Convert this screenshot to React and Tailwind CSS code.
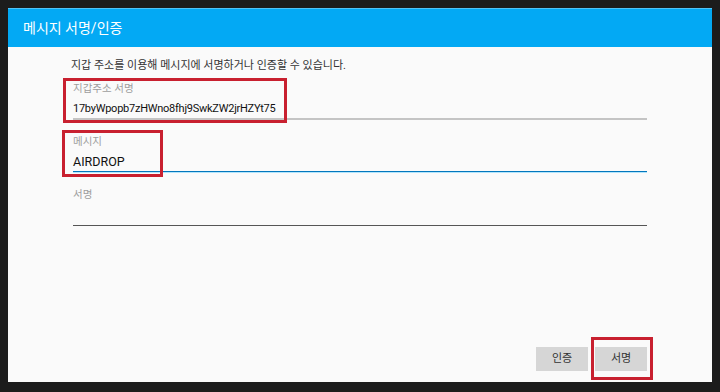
import React from "react";

const font = { fontFamily: 'Roboto, "Noto Sans CJK KR", sans-serif' };

function Field({ label, value, line, valueClass }) {
  return (
    <div className="flex flex-col">
      <div className="h-[14px] text-[10.5px] leading-[14px] text-[#9e9e9e]">{label}</div>
      <div className={`mt-[4px] h-[18px] leading-[18px] text-[#111] ${valueClass || "text-[11px]"}`}>
        {value}
      </div>
      <div className={line}></div>
    </div>
  );
}

export default function App() {
  return (
    <div
      className="w-[720px] h-[392px] bg-[#1c1c1c] pt-[8px] pl-[8px]"
      style={font}
    >
      <div className="relative w-[704px] h-[374px] bg-[#fafafa] flex flex-col">
        <div className="h-[39px] bg-[#03a9f4] border-t border-[#4fc3f7] flex items-center pl-[15px] text-[14px] text-white">
          메시지 서명/인증
        </div>

        <div className="flex-1 flex flex-col pt-[11px] pl-[65px] pr-[65px] pb-[11px]">
          <p className="-ml-[2px] h-[16px] text-[11px] leading-[16px] text-[#333]">
            지갑 주소를 이용해 메시지에 서명하거나 인증할 수 있습니다.
          </p>

          <div className="mt-[8px] flex flex-col gap-[15px]">
            <Field
              label="지갑주소 서명"
              value="17byWpopb7zHWno8fhj9SwkZW2jrHZYt75"
              valueClass="text-[11px] tracking-[-0.25px]"
              line="h-[2px] bg-[#c4c4c4]"
            />
            <Field
              label="메시지"
              value="AIRDROP"
              valueClass="text-[12.5px]"
              line="h-[2px] bg-[#0277bd] border-b border-[#b3e5fc]"
            />
            <Field label="서명" value="" line="mt-[1px] h-[1px] bg-[#555]" />
          </div>

          <div className="mt-auto flex justify-end gap-[7px]">
            <button className="w-[52px] h-[24px] bg-[#d6d6d6] text-[11px] text-[#333]">
              인증
            </button>
            <button className="w-[52px] h-[24px] bg-[#d6d6d6] text-[11px] text-[#333]">
              서명
            </button>
          </div>
        </div>

        {/* red annotation boxes */}
        <div className="absolute left-[55px] top-[70px] w-[224px] h-[45px] border-[3px] border-[#c8202f]"></div>
        <div className="absolute left-[54px] top-[122px] w-[101px] h-[47px] border-[3px] border-[#c8202f]"></div>
        <div className="absolute left-[583px] top-[329px] w-[62px] h-[43px] border-[3px] border-[#c8202f]"></div>
      </div>
    </div>
  );
}
